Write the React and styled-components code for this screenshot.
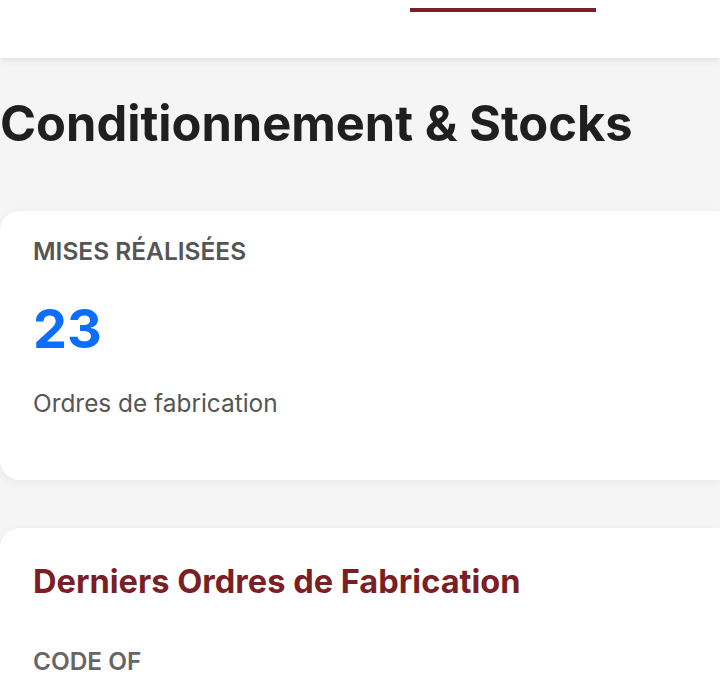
import React from 'react';
import styled, { createGlobalStyle } from 'styled-components';

const GlobalStyle = createGlobalStyle`
  body {
    margin: 0;
    background: #f5f5f5;
    font-family: Inter, 'Noto Sans', sans-serif;
  }
`;

const Header = styled.header`
  height: 58px;
  background: #ffffff;
  box-shadow: 0 2px 6px rgba(122, 31, 38, 0.12);
  display: flex;
  padding-left: 410px;
  position: relative;
  z-index: 1;
`;

const ActiveTab = styled.div`
  width: 186px;
  height: 4px;
  margin-top: 8px;
  background: #7a1f26;
`;

const Main = styled.main`
  padding: 37px 0 0;
  overflow: hidden;
`;

const PageTitle = styled.h1`
  margin: 0 0 57px;
  font-size: 48.8px;
  line-height: 1.2;
  font-weight: 700;
  color: #1f1f1f;
  white-space: nowrap;
`;

const Card = styled.section`
  background: #ffffff;
  border-radius: 20px 0 0 20px;
  box-shadow: 0 2px 10px rgba(0, 0, 0, 0.06);
  padding: ${(p) => p.$pad};
  margin-bottom: 48px;
`;

const StatLabel = styled.div`
  font-size: 24.5px;
  line-height: 1.2;
  font-weight: 600;
  color: #555555;
  text-transform: uppercase;
`;

const StatValue = styled.div`
  margin-top: 31px;
  font-size: 54px;
  line-height: 1.2;
  font-weight: 700;
  color: #0d6efd;
`;

const StatNote = styled.div`
  margin-top: 27px;
  font-size: 24.4px;
  line-height: 1.2;
  color: #555555;
`;

const SectionTitle = styled.h2`
  margin: 0;
  font-size: 32.6px;
  line-height: 1.2;
  font-weight: 700;
  color: #7a1f26;
`;

const Table = styled.table`
  margin-top: 46px;
  border-collapse: collapse;
`;

const HeadCell = styled.th`
  padding: 0;
  text-align: left;
  font-size: 24.4px;
  line-height: 1.2;
  font-weight: 600;
  color: #666666;
  text-transform: uppercase;
`;

export default function App() {
  return (
    <>
      <GlobalStyle />
      <Header>
        <ActiveTab />
      </Header>
      <Main>
        <PageTitle>Conditionnement &amp; Stocks</PageTitle>
        <Card $pad="26px 32px 62px 33px">
          <StatLabel>Mises réalisées</StatLabel>
          <StatValue>23</StatValue>
          <StatNote>Ordres de fabrication</StatNote>
        </Card>
        <Card $pad="34px 32px 40px 33px">
          <SectionTitle>Derniers Ordres de Fabrication</SectionTitle>
          <Table>
            <thead>
              <tr>
                <HeadCell>Code OF</HeadCell>
              </tr>
            </thead>
          </Table>
        </Card>
      </Main>
    </>
  );
}
